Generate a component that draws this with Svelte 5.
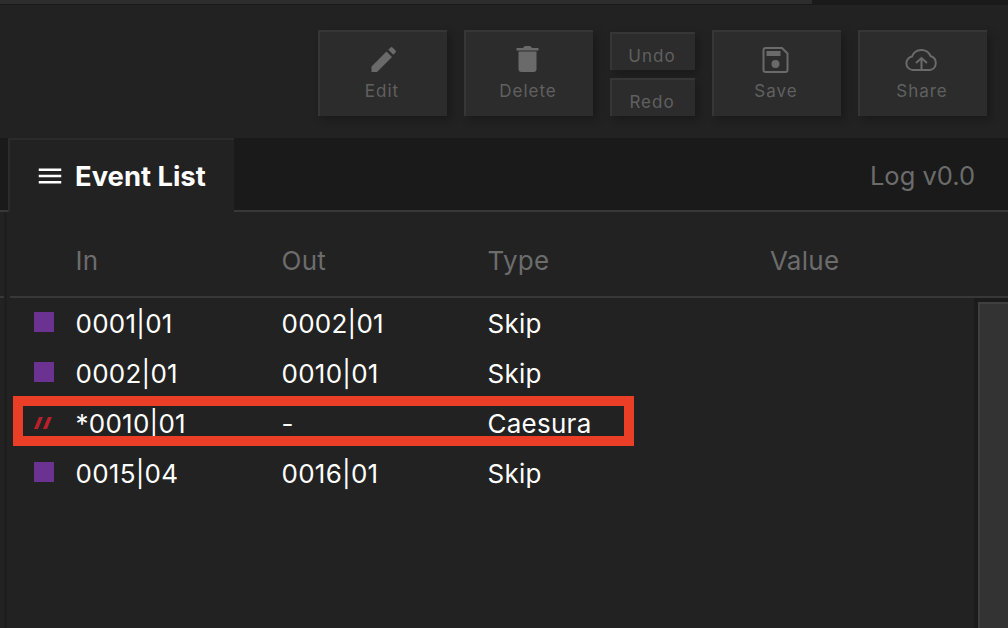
<script>
  const events = [
    { kind: "skip", in: "0001|01", out: "0002|01", type: "Skip" },
    { kind: "skip", in: "0002|01", out: "0010|01", type: "Skip" },
    { kind: "caesura", in: "*0010|01", out: "-", type: "Caesura" },
    { kind: "skip", in: "0015|04", out: "0016|01", type: "Skip" }
  ];
</script>

<div class="page">
  <div class="topstrip"><div class="progress"></div></div>

  <div class="toolbar">
    <button class="btn">
      <svg viewBox="0 0 36 30"><path d="M7.5 27v-5.5L22.5 6.5l5.5 5.5L13 27zM24.3 4.7l2.2-2.2a1.4 1.4 0 0 1 2 0l3 3a1.4 1.4 0 0 1 0 2l-2.2 2.2z" /></svg>
      <span>Edit</span>
    </button>
    <button class="btn">
      <svg viewBox="0 0 36 30"><path d="M6.5 3.5Q6.5 3 7 3H13Q14 1 15.5 1H19.5Q21 1 22 3H28Q28.5 3 28.5 3.5V5.5H6.5zM8.5 6.5H26.5V24a3 3 0 0 1-3 3H11.5a3 3 0 0 1-3-3z" /></svg>
      <span>Delete</span>
    </button>
    <div class="stack">
      <button class="btn small"><span>Undo</span></button>
      <button class="btn small"><span>Redo</span></button>
    </div>
    <button class="btn">
      <svg viewBox="0 0 36 30">
        <path class="line" d="M7.5 3H24L29.5 8.5V25a2 2 0 0 1-2 2H7.5a2 2 0 0 1-2-2V5a2 2 0 0 1 2-2z" />
        <path d="M8.5 6h14v5h-14z" />
        <circle cx="17.5" cy="19" r="4" />
      </svg>
      <span>Save</span>
    </button>
    <button class="btn">
      <svg viewBox="0 0 36 30">
        <path class="line" d="M9 25a6.8 6.8 0 0 1-1-13.5A10 10 0 0 1 26.5 11a7.2 7.2 0 0 1-.5 14z" />
        <path class="line" d="M17.5 25V13M12 18l5.5-5 5.5 5" />
      </svg>
      <span>Share</span>
    </button>
  </div>

  <div class="tabbar">
    <div class="tab">
      <svg viewBox="0 0 24 24"><path d="M3 18h18v-2H3v2zm0-5h18v-2H3v2zm0-7v2h18V6H3z" /></svg>
      <span>Event List</span>
    </div>
    <div class="version">Log v0.0</div>
  </div>

  <div class="panel">
    <div class="row head">
      <div></div>
      <div>In</div>
      <div>Out</div>
      <div>Type</div>
      <div>Value</div>
    </div>
    <div class="body">
      <div class="rows">
        {#each events as ev}
          <div class="row">
            <div class="marker">
              {#if ev.kind === "skip"}
                <span class="square"></span>
              {:else}
                <svg viewBox="0 0 18 12" class="slashes"><path d="M5 0h4L4 12H0zM14 0h4L13 12H9z" /></svg>
              {/if}
            </div>
            <div>{ev.in}</div>
            <div>{ev.out}</div>
            <div>{ev.type}</div>
            <div></div>
          </div>
        {/each}
      </div>
      <div class="scrollbar"><div class="thumb"></div></div>
    </div>
  </div>

  <div class="highlight"></div>
</div>

<style>
  :global(body) {
    margin: 0;
    background: #222222;
  }

  .page {
    position: relative;
    width: 1008px;
    height: 628px;
    overflow: hidden;
    background: #222222;
    font-family: Inter, "Liberation Sans", sans-serif;
  }

  .topstrip {
    height: 5px;
    background: #1a1a1a;
  }

  .progress {
    width: 812px;
    height: 4px;
    background: #2d2d2d;
  }

  .toolbar {
    display: flex;
    justify-content: flex-end;
    gap: 17px;
    padding: 25px 21px 22px 0;
    height: 86px;
  }

  .btn {
    display: flex;
    flex-direction: column;
    align-items: center;
    justify-content: flex-end;
    box-sizing: border-box;
    width: 129px;
    height: 86px;
    padding: 0 3px 15px 0;
    border: 0;
    border-top: 2px solid #363636;
    border-left: 2px solid #363636;
    background: #2c2c2c;
    box-shadow: 4px 4px 8px rgba(0, 0, 0, 0.25);
    color: #606060;
    font-family: inherit;
    font-size: 17px;
    line-height: 20px;
    letter-spacing: 1px;
  }

  .btn svg {
    display: block;
    width: 36px;
    height: 30px;
    margin-bottom: 6px;
    fill: #6a6a6a;
  }

  .btn svg .line {
    fill: none;
    stroke: #6a6a6a;
    stroke-width: 2;
  }

  .stack {
    display: flex;
    flex-direction: column;
    justify-content: flex-end;
    gap: 8px;
  }

  .btn.small {
    width: 85px;
    height: 38px;
    padding-bottom: 4px;
  }

  .tabbar {
    display: flex;
    justify-content: space-between;
    box-sizing: border-box;
    height: 74px;
    padding-left: 8px;
    background: #1a1a1a;
    border-bottom: 2px solid #383838;
  }

  .tab {
    display: flex;
    align-items: center;
    gap: 10px;
    box-sizing: border-box;
    width: 226px;
    height: 74px;
    padding: 0 0 0 25px;
    background: #222222;
    border-top: 2px solid #2b2b2b;
    border-left: 2px solid #2b2b2b;
    color: #ffffff;
    font-size: 27.4px;
    font-weight: 700;
  }

  .tab svg {
    width: 30px;
    height: 30px;
    flex: none;
    fill: #ffffff;
  }

  .version {
    padding: 0 33px 0 0;
    line-height: 76px;
    color: #6c6c6c;
    font-size: 25.5px;
  }

  .panel {
    background: linear-gradient(90deg, #222222 4px, #1e1e1e 4px, #1e1e1e 7px, #222222 7px);
    font-size: 26px;
    letter-spacing: 0.25px;
    color: #ffffff;
  }

  .row {
    display: grid;
    grid-template-columns: 75.5px 206px 206px 282.5px 1fr;
    align-items: center;
    height: 50px;
  }

  .row.head {
    box-sizing: border-box;
    height: 86px;
    padding-top: 10px;
    background: linear-gradient(90deg, #383838 4px, transparent 4px, transparent 10px, #383838 10px) bottom / 100% 2px no-repeat;
    color: #6c6c6c;
  }

  .body {
    display: flex;
  }

  .rows {
    flex: 1;
  }

  .marker {
    display: flex;
    padding-left: 34px;
  }

  .square {
    width: 20px;
    height: 20px;
    margin-top: -2px;
    background: #6c3292;
  }

  .slashes {
    width: 18px;
    height: 12px;
    fill: #b8202a;
  }

  .scrollbar {
    box-sizing: border-box;
    width: 34px;
    height: 330px;
    padding: 4px 0 0 4px;
    background: #1b1b1b;
  }

  .thumb {
    box-sizing: border-box;
    height: 100%;
    background: #333333;
    border-top: 2px solid #3f3f3f;
    border-left: 2px solid #3f3f3f;
  }

  /* annotation drawn over the list */
  .highlight {
    position: absolute;
    left: 13px;
    top: 396px;
    width: 601px;
    height: 30px;
    border: 10px solid #ea3f26;
  }
</style>
